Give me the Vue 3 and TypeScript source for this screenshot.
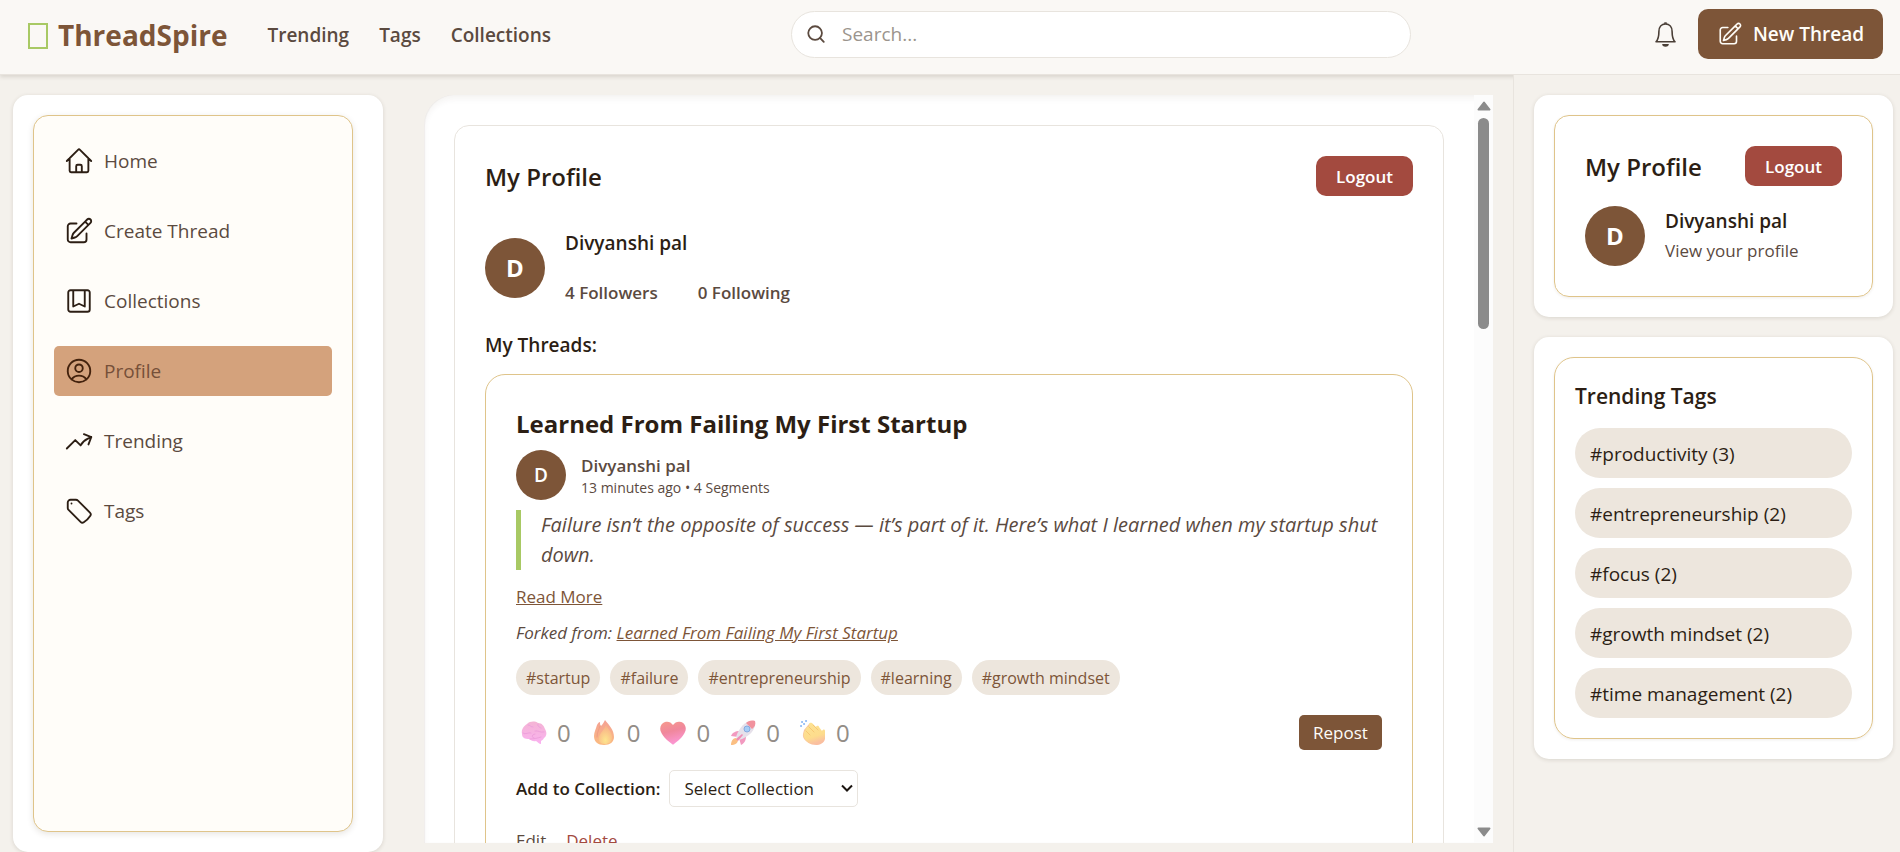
<script setup lang="ts">
import { ref } from 'vue'

interface NavItem {
  label: string
  icon: string
}

interface TagCount {
  name: string
  count: number
}

interface Reaction {
  kind: 'brain' | 'fire' | 'heart' | 'rocket' | 'clap'
  count: number
}

const pencilSquare =
  'M16.862 4.487l1.687-1.688a1.875 1.875 0 112.652 2.652L10.582 16.07a4.5 4.5 0 01-1.897 1.13L6 18l.8-2.685a4.5 4.5 0 011.13-1.897l8.932-8.931zm0 0L19.5 7.125M18 14v4.75A2.25 2.25 0 0115.75 21H5.25A2.25 2.25 0 013 18.75V8.25A2.25 2.25 0 015.25 6H10'

const topLinks: string[] = ['Trending', 'Tags', 'Collections']

const sideItems: NavItem[] = [
  {
    label: 'Home',
    icon: 'M2.25 12l8.954-8.955c.44-.439 1.152-.439 1.591 0L21.75 12M4.5 9.75v10.125c0 .621.504 1.125 1.125 1.125H9.75v-4.875c0-.621.504-1.125 1.125-1.125h2.25c.621 0 1.125.504 1.125 1.125V21h4.125c.621 0 1.125-.504 1.125-1.125V9.75M8.25 21h8.25',
  },
  { label: 'Create Thread', icon: pencilSquare },
  {
    label: 'Collections',
    icon: 'M5.2 3.4H18.8A1.8 1.8 0 0120.6 5.2V18.8A1.8 1.8 0 0118.8 20.6H5.2A1.8 1.8 0 013.4 18.8V5.2A1.8 1.8 0 015.2 3.4zM7.4 3.4V16.4L12 14.2L16.6 16.4V3.4',
  },
  {
    label: 'Profile',
    icon: 'M17.982 18.725A7.488 7.488 0 0012 15.75a7.488 7.488 0 00-5.982 2.975m11.963 0a9 9 0 10-11.963 0m11.963 0A8.966 8.966 0 0112 21a8.966 8.966 0 01-5.982-2.275M15 9.75a3 3 0 11-6 0 3 3 0 016 0z',
  },
  {
    label: 'Trending',
    icon: 'M2.25 18L9 11.25l4.306 4.307a11.95 11.95 0 015.814-5.519l2.74-1.22m0 0l-5.94-2.28m5.94 2.28l-2.28 5.941',
  },
  {
    label: 'Tags',
    icon: 'M9.568 3H5.25A2.25 2.25 0 003 5.25v4.318c0 .597.237 1.17.659 1.591l9.581 9.581c.699.699 1.78.872 2.607.33a18.095 18.095 0 005.223-5.223c.542-.827.369-1.908-.33-2.607L11.16 3.66A2.25 2.25 0 009.568 3zM6 6h.008v.008H6V6z',
  },
]

const activeItem = ref('Profile')

const threadTags: string[] = ['startup', 'failure', 'entrepreneurship', 'learning', 'growth mindset']

const reactions: Reaction[] = [
  { kind: 'brain', count: 0 },
  { kind: 'fire', count: 0 },
  { kind: 'heart', count: 0 },
  { kind: 'rocket', count: 0 },
  { kind: 'clap', count: 0 },
]

const trendingTags: TagCount[] = [
  { name: 'productivity', count: 3 },
  { name: 'entrepreneurship', count: 2 },
  { name: 'focus', count: 2 },
  { name: 'growth mindset', count: 2 },
  { name: 'time management', count: 2 },
]

const query = ref('')
const collection = ref('')
</script>

<template>
  <div class="app">
    <header class="topbar">
      <a class="brand" href="#"><span class="brand-mark"></span>ThreadSpire</a>
      <nav class="top-nav" aria-label="Main">
        <a v-for="link in topLinks" :key="link" href="#">{{ link }}</a>
      </nav>
      <label class="search">
        <svg viewBox="0 0 20 20" aria-hidden="true">
          <circle cx="9" cy="9" r="7.6" />
          <path d="M14.4 14.4l4.2 4.4" />
        </svg>
        <input v-model="query" type="search" placeholder="Search..." aria-label="Search" />
      </label>
      <div class="top-actions">
        <button class="bell" type="button" aria-label="Notifications">
          <svg viewBox="0 0 21 25" aria-hidden="true">
            <path d="M1 19.8C3.6 17.4 3.9 15 3.9 9.6C3.9 5 6.5 2 10.5 2S17.1 5 17.1 9.6C17.1 15 17.4 17.4 20 19.8z" />
            <path d="M9.2 1.6a1.4 1 0 012.6 0" />
            <path class="clapper" d="M7.2 22h6.6a3.3 2.8 0 01-6.6 0z" />
          </svg>
        </button>
        <button class="new-thread" type="button">
          <svg class="icon" viewBox="0 0 24 24" aria-hidden="true"><path :d="pencilSquare" /></svg>
          New Thread
        </button>
      </div>
    </header>

    <div class="body">
      <aside class="sidebar">
        <nav class="side-nav" aria-label="Sections">
          <a
            v-for="item in sideItems"
            :key="item.label"
            href="#"
            :class="['side-link', { active: item.label === activeItem }]"
            @click.prevent="activeItem = item.label"
          >
            <svg class="icon" viewBox="0 0 24 24" aria-hidden="true"><path :d="item.icon" /></svg>
            {{ item.label }}
          </a>
        </nav>
      </aside>

      <main class="main">
        <div class="scroller">
          <section class="profile">
            <div class="profile-head">
              <h1>My Profile</h1>
              <button class="logout" type="button">Logout</button>
            </div>
            <div class="person">
              <span class="avatar">D</span>
              <div>
                <div class="person-name">Divyanshi pal</div>
                <div class="stats"><span>4 Followers</span><span>0 Following</span></div>
              </div>
            </div>
            <h2>My Threads:</h2>

            <article class="thread">
              <h3>Learned From Failing My First Startup</h3>
              <div class="author">
                <span class="avatar small">D</span>
                <div class="author-text">
                  <div class="author-name">Divyanshi pal</div>
                  <div class="author-meta">13 minutes ago • 4 Segments</div>
                </div>
              </div>
              <blockquote>
                Failure isn’t the opposite of success — it’s part of it. Here’s what I learned when my startup shut
                down.
              </blockquote>
              <a class="read-more" href="#">Read More</a>
              <p class="forked">Forked from: <a href="#">Learned From Failing My First Startup</a></p>
              <div class="chips">
                <a v-for="tag in threadTags" :key="tag" class="chip" href="#">#{{ tag }}</a>
              </div>
              <div class="reaction-row">
                <button v-for="r in reactions" :key="r.kind" class="reaction" type="button" :aria-label="r.kind">
                  <svg v-if="r.kind === 'brain'" viewBox="0 0 26 26" aria-hidden="true">
                    <defs>
                      <linearGradient id="g-brain" x1="0" y1="0" x2="0" y2="1">
                        <stop offset="0" stop-color="#f4b4d4" />
                        <stop offset="1" stop-color="#fab2f0" />
                      </linearGradient>
                    </defs>
                    <path fill="url(#g-brain)" d="M1 14C0 9 3 6 6 4C9 1 14 1 17 3C21 3 23 6 24 9C26 12 26 16 23 18C22 20 21 20 20 21L20 24C18 24 17 22 15 21C12 22 10 20 8 19C4 19 1 18 1 14z" />
                    <path class="fold" stroke="#eea0dc" d="M2 13c3 2 5-1 8 0M7 5c2 0 3 2 5 2M13 18c-3 0-2-4 1-4M14 11c3-1 5 2 9 1M9 19c4 0 8-1 11-2M17 4c-1 2 1 3 3 4" />
                  </svg>
                  <svg v-else-if="r.kind === 'fire'" viewBox="0 0 26 26" aria-hidden="true">
                    <defs>
                      <linearGradient id="g-fire" x1="0" y1="0" x2="0" y2="1">
                        <stop offset="0" stop-color="#f4a194" />
                        <stop offset="1" stop-color="#fbbb80" />
                      </linearGradient>
                      <radialGradient id="g-flame" cx=".5" cy=".8" r=".75">
                        <stop offset="0" stop-color="#fde58e" />
                        <stop offset="1" stop-color="#f9b087" />
                      </radialGradient>
                    </defs>
                    <path fill="url(#g-fire)" d="M14 0C18 5 23 10 23 17C23 22 19 25 13 25C7 25 3 22 3 16C3 12 5 9 6 5C7 3 8 2 9 2C9 4 9 5 10 6C12 4 13 2 14 0z" />
                    <path fill="url(#g-flame)" d="M15 5C17 9 21 12 21 17C21 22 18 24 14 24C9 24 7 21 8 17C9 13 13 10 15 5z" />
                    <path class="fold" stroke="#ef9c84" d="M9 6C8 10 6 12 6 17" />
                  </svg>
                  <svg v-else-if="r.kind === 'heart'" viewBox="0 0 26 26" aria-hidden="true">
                    <defs>
                      <linearGradient id="g-heart" x1="0" y1="0" x2=".3" y2="1">
                        <stop offset="0" stop-color="#f69a8c" />
                        <stop offset=".5" stop-color="#f0879c" />
                        <stop offset="1" stop-color="#fb96d0" />
                      </linearGradient>
                    </defs>
                    <path fill="url(#g-heart)" d="M13 5C15 2 18 1 21 2C25 3 27 8 25 12C23 17 18 21 14 24Q13 25 12 24C8 21 3 17 1 12C-1 8 1 3 5 2C8 1 11 2 13 5z" />
                  </svg>
                  <svg v-else-if="r.kind === 'rocket'" viewBox="0 0 26 26" aria-hidden="true">
                    <path fill="#fbbf83" d="M6 18C3 18 1 21 1 25C5 25 8 23 8 20z" />
                    <path fill="#f29ac0" d="M10 11C5 11 2 13 1 16L8 17zM16 16C16 20 15 23 11 25L9 18z" />
                    <path fill="#e6e1ea" d="M24 1C16 0 9 7 6 17L9 20C19 17 26 10 25 2z" />
                    <path fill="#f1929e" d="M25 1C21 0 18 1 16 3L22 9C25 7 26 4 25 1z" />
                    <path fill="#ef8db6" d="M12 14L13 15L8 21L6 19z" />
                    <circle cx="17" cy="9" r="3" fill="#a7cdf6" stroke="#85a9df" />
                  </svg>
                  <svg v-else viewBox="0 0 26 26" aria-hidden="true">
                    <defs>
                      <linearGradient id="g-clap" x1="0" y1="0" x2=".3" y2="1">
                        <stop offset="0" stop-color="#fde394" />
                        <stop offset=".7" stop-color="#fddc8c" />
                        <stop offset="1" stop-color="#fabfa0" />
                      </linearGradient>
                    </defs>
                    <path fill="#f9c6a0" d="M4 10L9 4L13 6L13 24C7 23 2 19 3 14z" />
                    <path fill="url(#g-clap)" d="M6 9C6 7 8 6 9 7L9 4C10 2 12 3 13 4L16 7C17 5 19 6 19 7L22 11C23 9 25 9 25 11L25 19C24 23 20 25 16 25C10 25 6 22 4 17C3 14 4 12 6 9z" />
                    <path class="fold" stroke="#f6c774" d="M9 7L14 12M13 5L18 10M6 11L10 15" />
                    <path fill="none" stroke="#8bb9f5" stroke-width="2" stroke-linecap="round" d="M1 6h.1M4 4h.1M6 1h.1M2 2h.1" />
                  </svg>
                  <span>{{ r.count }}</span>
                </button>
                <button class="repost" type="button">Repost</button>
              </div>
              <div class="collect">
                <label for="collection">Add to Collection:</label>
                <div class="select">
                  <select id="collection" v-model="collection">
                    <option value="">Select Collection</option>
                  </select>
                  <svg viewBox="0 0 12 8" aria-hidden="true"><path d="M1 1.5l5 5 5-5" /></svg>
                </div>
              </div>
              <div class="manage">
                <a href="#">Edit</a>
                <a class="danger" href="#">Delete</a>
              </div>
            </article>
          </section>
        </div>
        <div class="scrollbar" aria-hidden="true">
          <svg viewBox="0 0 14 10"><path d="M7 1.5L12.5 8.5H1.5z" /></svg>
          <div class="track"><div class="thumb"></div></div>
          <svg viewBox="0 0 14 10"><path d="M7 8.5L12.5 1.5H1.5z" /></svg>
        </div>
      </main>

      <aside class="rail">
        <section class="card">
          <div class="panel mini">
            <div class="profile-head">
              <h2>My Profile</h2>
              <button class="logout" type="button">Logout</button>
            </div>
            <div class="person">
              <span class="avatar">D</span>
              <div>
                <div class="person-name">Divyanshi pal</div>
                <a class="view" href="#">View your profile</a>
              </div>
            </div>
          </div>
        </section>
        <section class="card">
          <div class="panel tags">
            <h2>Trending Tags</h2>
            <ul>
              <li v-for="tag in trendingTags" :key="tag.name">
                <a href="#">#{{ tag.name }} ({{ tag.count }})</a>
              </li>
            </ul>
          </div>
        </section>
      </aside>
    </div>
  </div>
</template>

<style>
body {
  margin: 0;
  background: #f4f1ec;
}
</style>

<style scoped>
.app {
  display: flex;
  flex-direction: column;
  height: 100vh;
  overflow: hidden;
  background: #f4f1ec;
  color: #2c1e14;
  font-family: 'Open Sans', 'Noto Sans', sans-serif;
  font-size: 19px;
  line-height: 30px;
}
.app *,
.app {
  box-sizing: border-box;
}
h1,
h2,
h3,
p,
ul,
blockquote {
  margin: 0;
  padding: 0;
}
a {
  color: inherit;
  text-decoration: none;
}
button,
input,
select {
  font: inherit;
  color: inherit;
}
button {
  border: 0;
  padding: 0;
  background: none;
  cursor: pointer;
}
.icon {
  width: 30px;
  height: 30px;
  flex: none;
  fill: none;
  stroke: currentColor;
  stroke-width: 1.5;
  stroke-linecap: round;
  stroke-linejoin: round;
}

/* Top bar */
.topbar {
  flex: none;
  display: flex;
  align-items: center;
  height: 75px;
  padding: 0 17px 6px 28px;
  background: #faf8f5;
  border-bottom: 1px solid #e8e4de;
  box-shadow: 0 2px 4px rgba(60, 40, 20, 0.14);
}
.brand {
  display: flex;
  align-items: center;
  gap: 10px;
  padding-top: 2px;
  color: #7d5538;
  font-size: 28px;
  font-weight: 700;
}
.brand-mark {
  width: 20px;
  height: 26px;
  margin-top: 2px;
  border: 2px solid #a8c964;
}
.top-nav {
  display: flex;
  gap: 30px;
  margin-left: 40px;
  padding-top: 2px;
  color: #5b4a3f;
  font-weight: 600;
}
.search {
  display: flex;
  align-items: center;
  gap: 17px;
  width: 620px;
  height: 47px;
  margin-left: auto;
  padding: 0 15px;
  background: #fff;
  border: 1px solid #e8e4de;
  border-radius: 24px;
}
.search svg {
  width: 18px;
  height: 18px;
  flex: none;
  fill: none;
  stroke: #5b4a3f;
  stroke-width: 2;
  stroke-linecap: round;
}
.search input {
  flex: 1;
  min-width: 0;
  border: 0;
  outline: 0;
  padding: 0;
  background: none;
}
.search input::placeholder {
  color: #9b948d;
  opacity: 1;
}
.top-actions {
  display: flex;
  align-items: center;
  gap: 22px;
  margin-left: 244px;
}
.bell {
  display: flex;
}
.bell svg {
  width: 21px;
  height: 25px;
  fill: none;
  stroke: #4a3f37;
  stroke-width: 1.6;
  stroke-linejoin: round;
}
.bell .clapper {
  fill: #4a3f37;
  stroke: none;
}
.new-thread {
  display: flex;
  align-items: center;
  justify-content: center;
  gap: 10px;
  width: 185px;
  height: 50px;
  border-radius: 10px;
  background: #7d5538;
  color: #fffdf8;
  font-weight: 600;
}
.new-thread .icon {
  width: 26px;
  height: 26px;
}

/* Columns */
.body {
  flex: 1;
  min-height: 0;
  display: flex;
}
.sidebar {
  flex: none;
  display: flex;
  width: 370px;
  margin: 20px 0 0 13px;
  padding: 20px 30px 20px 20px;
  background: #fff;
  border-radius: 15px;
  box-shadow: 0 1px 4px rgba(60, 40, 20, 0.14);
}
.side-nav {
  flex: 1;
  display: flex;
  flex-direction: column;
  gap: 20px;
  padding: 20px;
  background: #fffdf9;
  border: 1px solid #dfc48a;
  border-radius: 15px;
  box-shadow: 0 2px 6px rgba(60, 40, 20, 0.12);
}
.side-link {
  display: flex;
  align-items: center;
  gap: 10px;
  height: 50px;
  padding: 0 10px;
  border-radius: 5px;
  color: #5b4a3f;
}
.side-link .icon {
  color: #2c1e14;
}
.side-link.active {
  background: #d4a27c;
  color: #765039;
}
.side-link.active .icon {
  color: #43220d;
}

.main {
  flex: 1;
  min-width: 0;
  display: flex;
  margin: 20px 20px 9px 41px;
  background: #fff;
  border-top-left-radius: 30px;
  box-shadow: inset 0 4px 6px rgba(60, 40, 20, 0.05), inset 1px 0 1px rgba(60, 40, 20, 0.06);
  overflow: hidden;
}
.scroller {
  flex: 1;
  min-width: 0;
  padding: 30px;
  overflow-y: auto;
  scrollbar-width: none;
}
.scrollbar {
  flex: none;
  display: flex;
  flex-direction: column;
  align-items: center;
  gap: 7px;
  width: 19px;
  padding: 6px 0;
  background: #fcfcfc;
}
.scrollbar svg {
  width: 14px;
  height: 10px;
  fill: #8b8b8b;
  stroke: #8b8b8b;
  stroke-width: 2;
  stroke-linejoin: round;
}
.track {
  flex: 1;
  width: 11px;
}
.thumb {
  height: 30%;
  border-radius: 6px;
  background: #8b8b8b;
}

/* Profile */
.profile {
  padding: 30px;
  border: 1px solid #e8e4de;
  border-radius: 15px;
}
.profile-head {
  display: flex;
  align-items: center;
  justify-content: space-between;
}
.profile-head h1,
.profile-head h2 {
  padding-top: 2px;
  font-size: 24px;
  font-weight: 600;
}
.profile .profile-head {
  margin-bottom: 32px;
}
.logout {
  width: 97px;
  height: 40px;
  padding-top: 2px;
  border-radius: 10px;
  background: #a34a3f;
  color: #fff;
  font-size: 17px;
  font-weight: 600;
}
.person {
  display: flex;
  align-items: center;
  gap: 20px;
}
.avatar {
  flex: none;
  display: flex;
  align-items: center;
  justify-content: center;
  width: 60px;
  height: 60px;
  border-radius: 50%;
  background: #7d5538;
  color: #fff;
  font-size: 24px;
  font-weight: 700;
}
.avatar.small {
  width: 50px;
  height: 50px;
  font-size: 19px;
  font-weight: 600;
}
.person-name {
  font-weight: 600;
}
.stats {
  display: flex;
  gap: 40px;
  margin-top: 20px;
  color: #5b4a3f;
  font-size: 17px;
  font-weight: 600;
}
.profile > h2 {
  margin: 22px 0 14px;
  font-size: 19px;
  font-weight: 600;
}

/* Thread */
.thread {
  padding: 30px;
  border: 1px solid #dfc48a;
  border-radius: 20px;
}
.thread h3 {
  margin-bottom: 7px;
  font-size: 24px;
  font-weight: 700;
  line-height: 38px;
}
.author {
  display: flex;
  align-items: center;
  gap: 15px;
  color: #5b4a3f;
}
.author-text {
  padding-top: 4px;
}
.author-name {
  font-size: 17px;
  font-weight: 600;
  line-height: 22px;
}
.author-meta {
  font-size: 14px;
  line-height: 22px;
}
blockquote {
  margin: 10px 0 12px;
  padding-left: 20px;
  border-left: 5px solid #a8c964;
  color: #5b4a3f;
  font-size: 20px;
  font-style: italic;
}
.read-more {
  display: block;
  width: fit-content;
  color: #7d5538;
  font-size: 17px;
  text-decoration: underline;
}
.forked {
  margin: 6px 0 12px;
  color: #5b4a3f;
  font-size: 17px;
  font-style: italic;
}
.forked a {
  color: #7d5538;
  text-decoration: underline;
}
.chips {
  display: flex;
  flex-wrap: wrap;
  gap: 10px;
}
.chip {
  height: 35px;
  padding: 0 10px;
  border-radius: 18px;
  background: #ede6dd;
  color: #7d5538;
  font-size: 16px;
  line-height: 36px;
}
.reaction-row {
  display: flex;
  align-items: center;
  gap: 10px;
  height: 35px;
  margin: 20px 0;
}
.reaction {
  display: flex;
  align-items: center;
  gap: 10px;
  padding: 0 5px;
  color: #938d87;
  font-size: 24px;
}
.reaction svg {
  width: 26px;
  height: 26px;
}
.reaction .fold {
  fill: none;
  stroke-width: 1;
  stroke-linecap: round;
}
.repost {
  width: 83px;
  height: 35px;
  margin-left: auto;
  border-radius: 5px;
  background: #7d5538;
  color: #fffdf8;
  font-size: 17px;
}
.collect {
  display: flex;
  align-items: center;
  gap: 8px;
  font-size: 17px;
}
.collect label {
  font-weight: 600;
}
.select {
  position: relative;
}
.select select {
  display: block;
  width: 189px;
  height: 37px;
  padding: 0 15px;
  appearance: none;
  background: #fff;
  border: 1px solid #e8e4de;
  border-radius: 5px;
}
.select svg {
  position: absolute;
  top: 14px;
  right: 5px;
  width: 12px;
  height: 8px;
  fill: none;
  stroke: #1a1410;
  stroke-width: 2;
  pointer-events: none;
}
.manage {
  display: flex;
  gap: 20px;
  margin-top: 19px;
  color: #5b4a3f;
  font-size: 17px;
}
.manage .danger {
  color: #a34a3f;
}

/* Right rail */
.rail {
  position: relative;
  flex: none;
  display: flex;
  flex-direction: column;
  gap: 20px;
  width: 387px;
  padding: 20px 7px 20px 20px;
  background: #f4f1ec;
  border-left: 1px solid #e8e4de;
}
.card {
  padding: 20px;
  background: #fff;
  border-radius: 15px;
  box-shadow: 0 1px 4px rgba(60, 40, 20, 0.14);
}
.panel {
  border: 1px solid #dfc48a;
  border-radius: 15px;
  box-shadow: 0 1px 3px rgba(60, 40, 20, 0.08);
}
.panel.mini {
  padding: 30px;
}
.mini .person {
  margin-top: 20px;
}
.view {
  display: block;
  color: #5b4a3f;
  font-size: 17px;
}
.panel.tags {
  padding: 20px;
  border-radius: 20px;
}
.tags h2 {
  height: 50px;
  padding-top: 3px;
  font-size: 21px;
  font-weight: 600;
}
.tags ul {
  display: flex;
  flex-direction: column;
  gap: 10px;
  list-style: none;
}
.tags li a {
  display: block;
  height: 50px;
  padding: 0 15px;
  border-radius: 25px;
  background: #ede6dd;
  line-height: 52px;
}
</style>
